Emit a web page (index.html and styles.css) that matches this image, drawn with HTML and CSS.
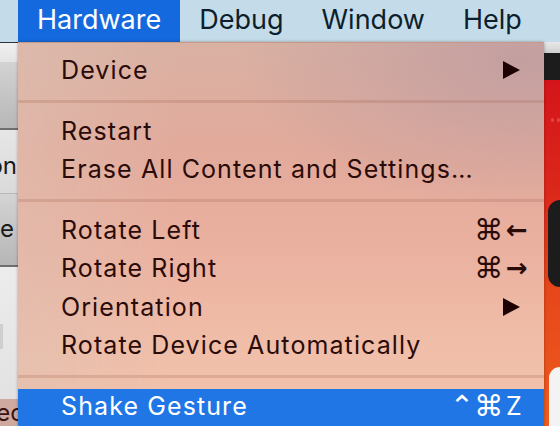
FILE: index.html
```html
<!DOCTYPE html>
<html lang="en">
<head>
<meta charset="utf-8">
<title>Hardware menu</title>
<link rel="stylesheet" href="styles.css">
</head>
<body>
<div class="screen">
  <header class="menubar">
    <span class="mb-item active">Hardware</span>
    <span class="mb-item">Debug</span>
    <span class="mb-item">Window</span>
    <span class="mb-item">Help</span>
  </header>
  <div class="desk">
    <aside class="left-win">
      <div class="lw-line dark"></div>
      <div class="lw-top"></div>
      <div class="lw-toolbar"></div>
      <div class="lw-line mid"></div>
      <div class="lw-row"><span class="frag">on</span></div>
      <div class="lw-line light"></div>
      <div class="lw-bar"><span class="frag e">e</span></div>
      <div class="lw-line mid"></div>
      <div class="lw-body"><i class="lw-nub"></i></div>
      <div class="lw-bottom"><span class="frag ec">ec</span></div>
    </aside>

    <nav class="menu">
      <div class="item"><span class="label">Device</span><svg class="sub" viewBox="0 0 17 18"><polygon points="0,0 17,9 0,18"/></svg></div>
      <div class="sep"></div>
      <div class="item"><span class="label">Restart</span></div>
      <div class="item"><span class="label">Erase All Content and Settings…</span></div>
      <div class="sep"></div>
      <div class="item"><span class="label">Rotate Left</span><span class="mods">⌘</span><span class="key arrow">←</span></div>
      <div class="item"><span class="label">Rotate Right</span><span class="mods">⌘</span><span class="key arrow">→</span></div>
      <div class="item"><span class="label">Orientation</span><svg class="sub" viewBox="0 0 17 18"><polygon points="0,0 17,9 0,18"/></svg></div>
      <div class="item"><span class="label">Rotate Device Automatically</span></div>
      <div class="sep"></div>
      <div class="item selected"><span class="label">Shake Gesture</span><span class="mods">⌃⌘</span><span class="key">Z</span></div>
    </nav>

    <aside class="sim">
      <div class="sim-top"></div>
      <div class="sim-dark"></div>
      <div class="sim-screen">
        <div class="sim-dots"><i></i><i></i></div>
        <div class="sim-pill"></div>
        <div class="sim-card"></div>
      </div>
    </aside>
  </div>
</div>
</body>
</html>
```

FILE: styles.css
```css
* { box-sizing: border-box; }

html, body {
  margin: 0;
  padding: 0;
}

body {
  width: 560px;
  height: 426px;
  overflow: hidden;
  font-family: Inter, "Liberation Sans", sans-serif;
}

.screen {
  width: 560px;
  height: 426px;
  display: flex;
  flex-direction: column;
  overflow: hidden;
}

/* ---------- menu bar ---------- */
.menubar {
  height: 42px;
  flex: none;
  display: flex;
  padding-left: 18px;
  background: #c4dcea;
}

.mb-item {
  padding: 0 19px 2px 19px;
  font-size: 27px;
  line-height: 40px;
  color: #0d1f2c;
}

.mb-item.active {
  background: #1569df;
  color: #ffffff;
}

/* ---------- desk ---------- */
.desk {
  flex: 1;
  display: flex;
  min-height: 0;
}

/* left window fragment */
.left-win {
  width: 18px;
  flex: none;
  display: flex;
  flex-direction: column;
  overflow: hidden;
  background: #e9e9e9;
}

.lw-line { height: 1px; flex: none; }
.lw-line.dark { background: #2b343c; }
.lw-line.mid { background: #6e6e6e; height: 2px; }
.lw-line.light { background: #b9b9b9; }

.lw-top {
  height: 19px;
  background: linear-gradient(#f0f0f0, #e4e4e4);
}

.lw-toolbar {
  height: 66px;
  background: linear-gradient(#d3d3d3, #b7b7b7);
}

.lw-row {
  height: 63px;
  background: linear-gradient(#e6e6e6, #dadada);
  display: flex;
  justify-content: flex-end;
  align-items: flex-start;
  padding-top: 24px;
}

.lw-bar {
  height: 71px;
  background: linear-gradient(#d4d4d4, #b6b6b6);
  display: flex;
  justify-content: flex-end;
  align-items: flex-start;
  padding-top: 23px;
}

.lw-body {
  height: 132px;
  background: linear-gradient(#ececec, #e2e2e2);
  padding-top: 57px;
}

.lw-nub {
  display: block;
  width: 3px;
  height: 25px;
  background: #cfcfcf;
}

.lw-bottom {
  flex: 1;
  background: #cfa9a0;
  display: flex;
  justify-content: flex-end;
  align-items: flex-start;
  padding-top: 2px;
}

.frag {
  font-size: 24px;
  line-height: 24px;
  color: #1a1a1a;
  white-space: nowrap;
  margin-right: 1px;
}

.frag.e { margin-right: 4px; }
.frag.ec { color: #3a1410; margin-right: -6px; }

/* ---------- the dropdown menu ---------- */
.menu {
  width: 526px;
  flex: none;
  padding-top: 10px;
  border-top: 1px solid rgba(120, 80, 70, 0.35);
  box-shadow: 0 0 3px rgba(40, 10, 0, 0.35);
  position: relative;
  z-index: 1;
  background:
    radial-gradient(ellipse 55% 40% at 96% 4%, rgba(194, 158, 160, 0.95), rgba(194, 158, 160, 0) 100%),
    linear-gradient(90deg, rgba(222, 192, 178, 0.55), rgba(222, 192, 178, 0) 30%),
    linear-gradient(180deg, #d9b1a3 0%, #e2aa9b 28%, #eab09f 52%, #f0bea9 80%, #f3c4ac 100%);
}

.item {
  height: 38.5px;
  display: flex;
  align-items: flex-start;
  padding: 0 10px 4px 43px;
  font-size: 25px;
  line-height: 34.5px;
  color: #2b0b08;
  letter-spacing: 1.1px;
  white-space: nowrap;
}

.label { flex: 1; }

.mods {
  font-family: "DejaVu Sans", sans-serif;
  font-size: 29px;
  letter-spacing: 0;
}

.key {
  width: 28px;
  margin-left: 3px;
  letter-spacing: 0;
}

.key.arrow {
  font-family: "DejaVu Sans", sans-serif;
  font-weight: bold;
  font-size: 26px;
}

.sub {
  width: 17px;
  height: 18px;
  margin: 8px 14px 0 0;
  fill: #1c0202;
}

.sep {
  height: 22px;
  padding-top: 8px;
}

.sep::before {
  content: "";
  display: block;
  height: 3px;
  background: rgba(160, 90, 70, 0.22);
}

.item.selected {
  background: #2176e5;
  color: #ffffff;
}

/* ---------- simulator window fragment ---------- */
.sim {
  flex: 1;
  display: flex;
  flex-direction: column;
  overflow: hidden;
}

.sim-top {
  height: 11px;
  background: linear-gradient(#e8e8e8, #cfcfcf);
}

.sim-dark {
  height: 27px;
  background: #1c1c1c;
}

.sim-screen {
  flex: 1;
  padding-left: 4px;
  background: linear-gradient(180deg, #d4141a 0%, #dc2a1b 35%, #e6461b 60%, #ee5d1e 100%);
  display: flex;
  flex-direction: column;
}

.sim-dots {
  height: 120px;
  display: flex;
  gap: 3px;
  padding: 38px 0 0 3px;
}

.sim-dots i {
  width: 4px;
  height: 4px;
  border-radius: 50%;
  background: rgba(255, 150, 150, 0.35);
}

.sim-pill {
  height: 87px;
  background: #1c1c1c;
  border-radius: 14px 0 0 14px;
}

.sim-card {
  margin-top: 80px;
  margin-left: 1px;
  flex: 1;
  background: #f3f3f3;
  border-radius: 14px 0 0 0;
}
```
